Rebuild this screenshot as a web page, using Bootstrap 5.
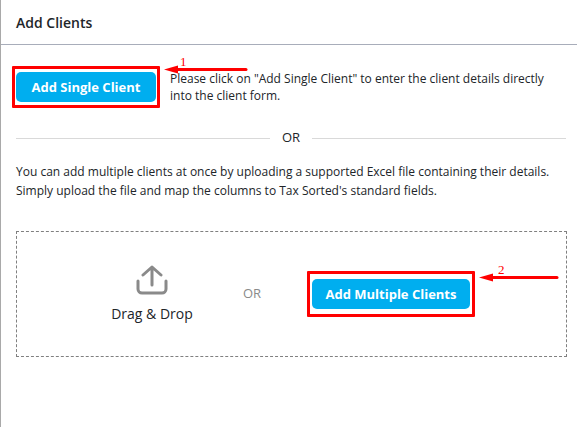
<!DOCTYPE html>
<html lang="en"><head><meta charset="utf-8">
<link href="https://cdn.jsdelivr.net/npm/bootstrap@5.3.0/dist/css/bootstrap.min.css" rel="stylesheet">
<style>
html,body{height:100%;overflow:hidden}
body{font-family:"Open Sans",sans-serif;color:#212529;background:#fff;font-size:12px}
.panel{position:relative;height:427px;border-left:1px solid #a9a9a9;padding-left:0}
.head{height:45px;border-bottom:1px solid #a8adba;padding-left:15px;font-size:14px;font-weight:600;line-height:46px;color:#212529}
.body-area{padding:21px 11px 0 11px}
.red-box{border:3px solid #f00;border-radius:1px;padding:3px;background:#fff}
.red-one{padding:3px 1px;margin-right:10px}
.cta{background:#00aeef;color:#fff;font-weight:700;font-size:13px;border:0;border-radius:5px;height:30px;line-height:30px;padding:0}
.cta-a{width:140px}
.cta-b{width:158px}
.red-two{padding:5px 2px 5px 2px}
.intro{line-height:17px;margin:4px 0 0 0;width:385px}
.sep{margin:20px 0 0 4px;width:550px;height:20px;color:#212529;font-size:13px}
.sep hr{flex:1;margin:0;border-top:1px solid #d9d9d9;opacity:1}
.bulk{margin:14px 0 0 4px;line-height:19px;width:550px}
.drop{margin:31px 0 0 4px;width:551px;height:126px;border:1px dashed #808080;position:relative}
.drag{width:128px;margin-left:71px;font-size:14px}
.or-text{color:#8a8a8a;font-size:13px;width:20px;margin-left:27px}
.red-two{margin-left:44px}
.note{position:absolute;color:#f00;font-family:"Liberation Serif",serif;font-size:13px;line-height:14px}
.arrow{position:absolute}
</style></head><body>
<div class="panel">
<div class="head">Add Clients</div>
<div class="body-area">
<div class="d-flex align-items-start">
<div class="red-box red-one"><button class="btn cta cta-a d-block" type="button">Add Single Client</button></div>
<p class="intro">Please click on "Add Single Client" to enter the client details directly into the client form.</p>
</div>
<div class="sep d-flex align-items-center gap-2"><hr><span class="px-1">OR</span><hr></div>
<p class="bulk">You can add multiple clients at once by uploading a supported Excel file containing their details. Simply upload the file and map the columns to Tax Sorted's standard fields.</p>
<div class="drop d-flex align-items-center">
<div class="drag text-center">
<svg width="32" height="30" viewBox="0 0 32 30" fill="none" stroke="#8a8a8a" stroke-width="3" stroke-linecap="round" stroke-linejoin="round" class="d-block mx-auto"><path d="M16 20V2M7 10l9-8 9 8"/><path d="M2 16v8a4 4 0 0 0 4 4h20a4 4 0 0 0 4-4v-8"/></svg>
<div class="mt-2">Drag &amp; Drop</div>
</div>
<div class="or-text">OR</div>
<div class="red-box red-two"><button class="btn cta cta-b d-block" type="button">Add Multiple Clients</button></div>
</div>
</div>
<span class="note" style="left:179px;top:55px">1</span>
<span class="note" style="left:497px;top:263px">2</span>
<svg class="arrow" style="left:160px;top:60px" width="90" height="20"><path d="M85 9.500H15" stroke="#f00" stroke-width="3" stroke-linecap="round"/><path d="M3 9.500L17 5.500V13.500Z" fill="#f00"/></svg>
<svg class="arrow" style="left:475px;top:268px" width="90" height="20"><path d="M81 9.500H15" stroke="#f00" stroke-width="3" stroke-linecap="round"/><path d="M3 9.500L17 5.500V13.500Z" fill="#f00"/></svg>
</div>
<script src="https://cdn.jsdelivr.net/npm/bootstrap@5.3.0/dist/js/bootstrap.bundle.min.js"></script>
</body></html>
